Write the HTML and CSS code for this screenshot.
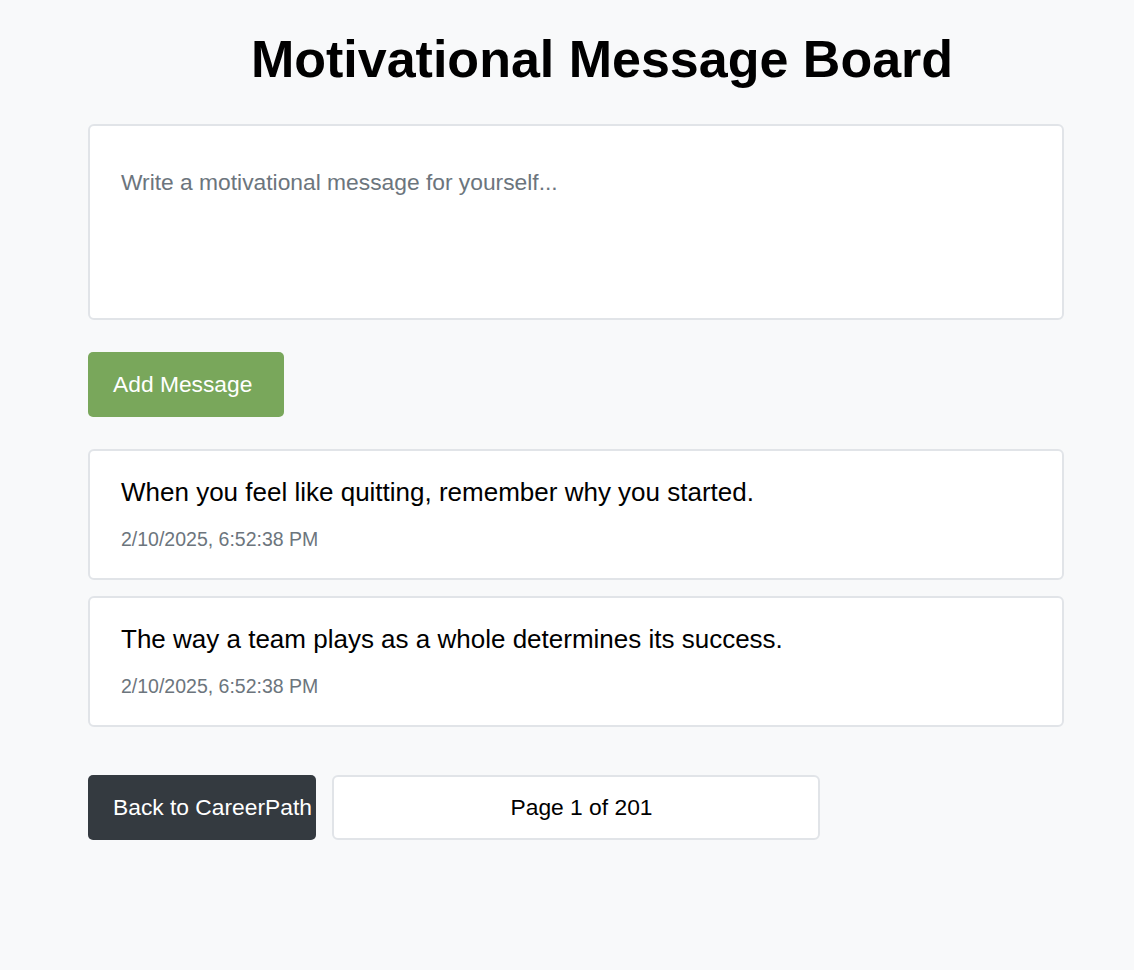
FILE: index.html
```html
<!DOCTYPE html>
<html lang="en">
<head>
<meta charset="utf-8">
<title>Motivational Message Board</title>
<link rel="stylesheet" href="styles.css">
</head>
<body>
<main class="board">
  <h1 class="title">Motivational Message Board</h1>
  <textarea class="composer" placeholder="Write a motivational message for yourself..."></textarea>
  <button class="btn btn-add" type="button">Add Message</button>
  <ul class="messages">
    <li class="message">
      <p class="message-text">When you feel like quitting, remember why you started.</p>
      <p class="message-date">2/10/2025, 6:52:38 PM</p>
    </li>
    <li class="message">
      <p class="message-text">The way a team plays as a whole determines its success.</p>
      <p class="message-date">2/10/2025, 6:52:38 PM</p>
    </li>
  </ul>
  <div class="footer-row">
    <button class="btn btn-back" type="button">Back to CareerPath</button>
    <div class="pager">Page 1 of 201</div>
  </div>
</main>
</body>
</html>
```

FILE: styles.css
```css
* { box-sizing: border-box; }
html, body { margin: 0; padding: 0; }
body {
  background: #f8f9fa;
  font-family: "Liberation Sans", Arial, sans-serif;
  color: #000;
  min-height: 970px;
}
.board {
  width: 976px;
  margin-left: 88px;
  display: flex;
  flex-direction: column;
  align-items: flex-start;
}
.title {
  align-self: stretch;
  margin: 27px 0 0 0;
  padding-left: 52px;
  text-align: center;
  font-size: 52px;
  line-height: 64px;
  font-weight: 700;
}
.composer {
  margin-top: 33px;
  width: 976px;
  height: 196px;
  border: 2px solid #e1e4e8;
  border-radius: 6px;
  background: #fff;
  padding: 43px 31px;
  font-family: "Liberation Sans", Arial, sans-serif;
  font-size: 22.8px;
  line-height: 26px;
  resize: none;
  outline: none;
}
.composer::placeholder { color: #6c757d; }
.btn {
  border: none;
  border-radius: 5px;
  color: #fff;
  font-family: "Liberation Sans", Arial, sans-serif;
  font-size: 22.8px;
  height: 65px;
  padding: 0 25px;
  text-align: left;
  cursor: pointer;
}
.btn-add {
  margin-top: 32px;
  width: 196px;
  background: #79a75b;
}
.messages {
  list-style: none;
  margin: 32px 0 0 0;
  padding: 0;
  width: 976px;
  display: flex;
  flex-direction: column;
  gap: 16px;
}
.message {
  background: #fff;
  border: 2px solid #e1e4e8;
  border-radius: 6px;
  height: 131px;
  padding: 25px 31px 0;
}
.message-text {
  margin: 0;
  font-size: 26px;
  line-height: 32px;
}
.message-date {
  margin: 20px 0 0 0;
  font-size: 19.5px;
  line-height: 22px;
  color: #6c757d;
}
.footer-row {
  margin-top: 48px;
  display: flex;
  gap: 16px;
}
.btn-back {
  width: 228px;
  background: #343a40;
  white-space: nowrap;
  overflow: visible;
}
.pager {
  width: 488px;
  height: 65px;
  background: #fff;
  border: 2px solid #e1e4e8;
  border-radius: 6px;
  display: flex;
  align-items: center;
  justify-content: center;
  padding-left: 11px;
  font-size: 22.8px;
}
```
